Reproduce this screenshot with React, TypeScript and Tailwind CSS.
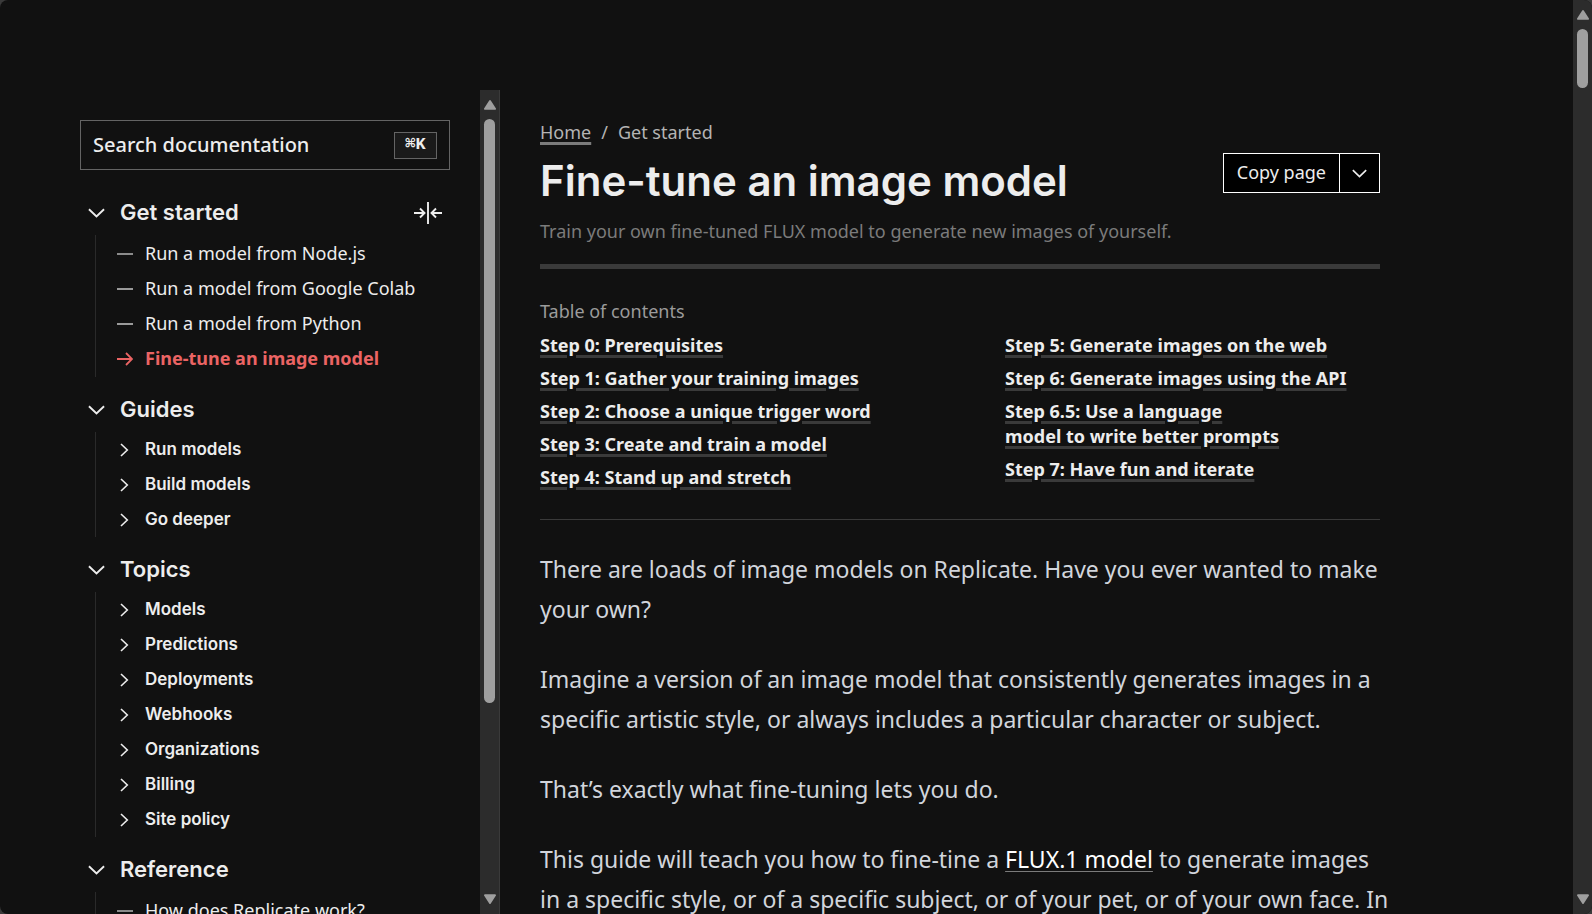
import React, { useState } from 'react';

interface NavItem {
  label: string;
  active?: boolean;
}

interface NavSection {
  title: string;
  kind: 'pages' | 'groups';
  items: NavItem[];
}

const sections: NavSection[] = [
  {
    title: 'Get started',
    kind: 'pages',
    items: [
      { label: 'Run a model from Node.js' },
      { label: 'Run a model from Google Colab' },
      { label: 'Run a model from Python' },
      { label: 'Fine-tune an image model', active: true },
    ],
  },
  {
    title: 'Guides',
    kind: 'groups',
    items: [{ label: 'Run models' }, { label: 'Build models' }, { label: 'Go deeper' }],
  },
  {
    title: 'Topics',
    kind: 'groups',
    items: [
      { label: 'Models' },
      { label: 'Predictions' },
      { label: 'Deployments' },
      { label: 'Webhooks' },
      { label: 'Organizations' },
      { label: 'Billing' },
      { label: 'Site policy' },
    ],
  },
  {
    title: 'Reference',
    kind: 'pages',
    items: [{ label: 'How does Replicate work?' }],
  },
];

const tocLeft = [
  'Step 0: Prerequisites',
  'Step 1: Gather your training images',
  'Step 2: Choose a unique trigger word',
  'Step 3: Create and train a model',
  'Step 4: Stand up and stretch',
];

const tocRight = [
  'Step 5: Generate images on the web',
  'Step 6: Generate images using the API',
  'Step 6.5: Use a language model to write better prompts',
  'Step 7: Have fun and iterate',
];

function ChevronDown({ className }: { className: string }) {
  return (
    <svg viewBox="0 0 18 10" className={className} fill="none" stroke="currentColor" strokeWidth="2">
      <path d="M1 1l8 7.700L17 1" />
    </svg>
  );
}

function ChevronRight() {
  return (
    <svg viewBox="0 0 9 14" className="h-3.5 w-[9px]" fill="none" stroke="currentColor" strokeWidth="1.6">
      <path d="M1 1l6.300 6L1 13" />
    </svg>
  );
}

function Dash() {
  return (
    <svg viewBox="0 0 16 16" className="size-4 text-[#b4b4b4]" fill="none" stroke="currentColor" strokeWidth="1.7">
      <path d="M0 8h16" />
    </svg>
  );
}

function Arrow() {
  return (
    <svg viewBox="0 0 16 16" className="size-4" fill="none" stroke="currentColor" strokeWidth="1.8">
      <path d="M0 8h15M9 2l6 6-6 6" />
    </svg>
  );
}

function CollapseIcon() {
  return (
    <svg viewBox="0 0 28 22" className="h-[22px] w-7" fill="none" stroke="currentColor" strokeWidth="1.9">
      <path d="M14 0v22M0 11h10.500M6 6.500l4.500 4.500-4.500 4.500M28 11H17.500M22 6.500L17.500 11l4.500 4.500" />
    </svg>
  );
}

function Triangle({ className }: { className: string }) {
  return (
    <svg viewBox="0 0 12 10" className={className} fill="currentColor">
      <path d="M5.200.6a1 1 0 0 1 1.600 0l5 7.600a1 1 0 0 1-.8 1.600H1a1 1 0 0 1-.8-1.600z" />
    </svg>
  );
}

function Scrollbar({ thumb }: { thumb: string }) {
  return (
    <div className="flex w-[19px] shrink-0 flex-col items-center bg-[#2c2c2c] py-2.5 text-[#9f9f9f]" aria-hidden="true">
      <Triangle className="h-2.5 w-3" />
      <div className={`mt-[9px] w-[11px] rounded-full bg-[#9f9f9f] ${thumb}`} />
      <Triangle className="mt-auto h-2.5 w-3 rotate-180" />
    </div>
  );
}

function Section({ section }: { section: NavSection }) {
  const [open, setOpen] = useState(true);
  const isPages = section.kind === 'pages';

  return (
    <section>
      <button
        onClick={() => setOpen(!open)}
        aria-expanded={open}
        className="flex h-[45px] w-full items-center gap-[15px] pl-2 font-['Inter'] text-[22px] font-semibold"
      >
        <ChevronDown className="h-2.5 w-[17px]" />
        {section.title}
      </button>
      {open && (
        <ul className={`ml-[15px] border-l border-[#2a2a2a] ${isPages ? 'py-px' : ''}`}>
          {section.items.map((item) => (
            <li key={item.label}>
              <a
                href="#"
                className={`flex h-[35px] items-center pl-[21px] ${
                  item.active
                    ? 'text-[18px] font-bold text-[#eb6464]'
                    : isPages
                      ? 'text-[18px]'
                      : "font-['Inter'] text-[17px] font-semibold"
                }`}
              >
                <span className="flex w-7 items-center">
                  {item.active ? (
                    <Arrow />
                  ) : isPages ? (
                    <Dash />
                  ) : (
                    <span className="pl-[3px]">
                      <ChevronRight />
                    </span>
                  )}
                </span>
                {item.label}
              </a>
            </li>
          ))}
        </ul>
      )}
    </section>
  );
}

function TocList({ items }: { items: string[] }) {
  return (
    <ul className="flex flex-col gap-2">
      {items.map((item) => (
        <li key={item} className="text-balance">
          <a
            href="#"
            className="underline decoration-[#3a3a3a] decoration-[3px] underline-offset-[3px]"
          >
            {item}
          </a>
        </li>
      ))}
    </ul>
  );
}

export default function App() {
  return (
    <div className="h-screen bg-[#3a3a3a] font-['Noto_Sans',sans-serif] text-[#ededed]">
      <div className="flex h-full overflow-hidden rounded-lg bg-[#111111]">
        <div className="flex min-w-0 flex-1 pt-[90px]">
          <aside className="flex w-[500px] shrink-0 border-r border-[#3a3a3a]">
            <div className="flex-1 overflow-hidden pt-[30px] pr-[30px] pl-20">
              <button className="flex h-[50px] w-full items-center justify-between border border-[#646464] px-3 text-[20px] font-medium">
                Search documentation
                <kbd className="flex h-[27px] w-[43px] items-center justify-center border border-[#646464] bg-[#1a1a1a] font-['Liberation_Mono',monospace] text-[17px] font-bold">
                  ⌘K
                </kbd>
              </button>
              <nav className="relative mt-5 flex flex-col gap-2.5">
                {sections.map((section) => (
                  <Section key={section.title} section={section} />
                ))}
                <button className="absolute top-3 right-2" aria-label="Collapse all">
                  <CollapseIcon />
                </button>
              </nav>
            </div>
            <Scrollbar thumb="h-[584px]" />
          </aside>

          <main className="min-w-0 max-w-[896px] flex-1 overflow-hidden pt-[30px] pl-10">
            <header className="flex max-w-[840px] items-start justify-between border-b-[5px] border-[#3a3a3a] pb-[18px]">
              <div>
                <nav className="flex gap-2.5 text-[18px] leading-[25px] text-[#b4b4b4]" aria-label="Breadcrumb">
                  <a href="#" className="underline decoration-[#7b7b7b] decoration-[3px] underline-offset-[3px]">
                    Home
                  </a>
                  <span>/</span>
                  <span>Get started</span>
                </nav>
                <h1 className="mt-2 font-['Inter'] text-[42px] leading-[56px] font-semibold">
                  Fine-tune an image model
                </h1>
                <p className="mt-[7px] text-[18px] leading-[30px] text-[#7b7b7b]">
                  Train your own fine-tuned FLUX model to generate new images of yourself.
                </p>
              </div>
              <div className="mt-[33px] flex h-10 shrink-0 border border-white bg-black">
                <button className="px-[13px] pb-0.5 text-[18px]">Copy page</button>
                <button className="flex w-10 items-center justify-center border-l border-white" aria-label="More copy options">
                  <ChevronDown className="h-[9px] w-[15px]" />
                </button>
              </div>
            </header>

            <section className="max-w-[840px] border-b border-[#3a3a3a] pt-[30px] pb-[29px] text-[18px] leading-[25px]">
              <h2 className="text-[#9b9b9b]">Table of contents</h2>
              <div className="mt-[9px] grid grid-cols-2 gap-[90px] font-bold">
                <TocList items={tocLeft} />
                <TocList items={tocRight} />
              </div>
            </section>

            <article className="flex max-w-[852px] flex-col gap-[30px] pt-[29px] text-[23px] leading-10 text-gray-300">
              <p>There are loads of image models on Replicate. Have you ever wanted to make your own?</p>
              <p>
                Imagine a version of an image model that consistently generates images in a specific artistic
                style, or always includes a particular character or subject.
              </p>
              <p>That’s exactly what fine-tuning lets you do.</p>
              <p>
                This guide will teach you how to fine-tine a{' '}
                <a href="#" className="text-white underline decoration-[#7b7b7b] decoration-1 underline-offset-[3px]">
                  FLUX.1 model
                </a>{' '}
                to generate images in a specific style, or of a specific subject, or of your pet, or of your own
                face. In
              </p>
            </article>
          </main>
        </div>
        <Scrollbar thumb="h-[59px]" />
      </div>
    </div>
  );
}
